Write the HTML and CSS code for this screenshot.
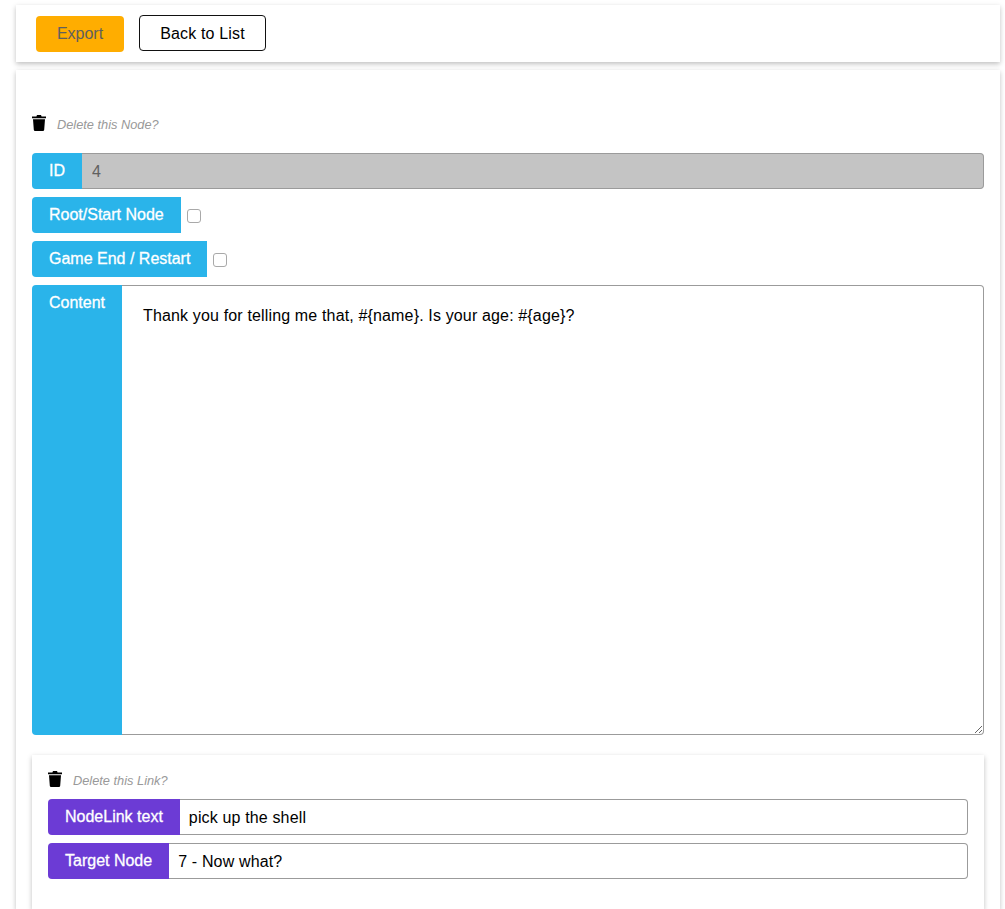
FILE: index.html
```html
<!DOCTYPE html>
<html lang="en">
  <head>
    <meta charset="UTF-8" />
    <title>Edit Node</title>
    <link rel="stylesheet" href="styles.css">
  </head>
  <body>
    <div class="card toolbar">
      <button class="btn btn-export" type="button">Export</button>
      <button class="btn btn-back" type="button">Back to List</button>
    </div>

    <div class="card node">
      <div class="delete-row node-delete">
        <svg class="trash" viewBox="0 0 14 16"><path d="M5 0h4l.6 1.4H14v1.8H0V1.400h4.400zM1 4.300h12l-.8 10.500q-.1 1.200-1.300 1.200H3.100q-1.200 0-1.300-1.200z"/></svg>
        <span class="delete-text">Delete this Node?</span>
      </div>

      <div class="field">
        <label class="field-label" for="node_id">ID</label>
        <input class="field-input" id="node_id" type="text" value="4" disabled />
      </div>
      <div class="field">
        <label class="field-label" for="root_node">Root/Start Node</label>
        <input class="field-check" id="root_node" type="checkbox" />
      </div>
      <div class="field">
        <label class="field-label" for="game_end">Game End / Restart</label>
        <input class="field-check" id="game_end" type="checkbox" />
      </div>
      <div class="field">
        <label class="field-label" for="content">Content</label>
        <textarea class="field-input field-text" id="content">Thank you for telling me that, #{name}. Is your age: #{age}?</textarea>
      </div>

      <div class="card link">
        <div class="delete-row">
          <svg class="trash" viewBox="0 0 14 16"><path d="M5 0h4l.6 1.4H14v1.8H0V1.400h4.400zM1 4.300h12l-.8 10.500q-.1 1.200-1.300 1.200H3.100q-1.200 0-1.300-1.200z"/></svg>
          <span class="delete-text">Delete this Link?</span>
        </div>
        <div class="field">
          <label class="field-label purple" for="link_text">NodeLink text</label>
          <input class="field-input" id="link_text" type="text" value="pick up the shell" />
        </div>
        <div class="field">
          <label class="field-label purple" for="target">Target Node</label>
          <input class="field-input" id="target" type="text" value="7 - Now what?" />
        </div>
      </div>
    </div>
  </body>
</html>
```

FILE: styles.css
```css
body {
  font-family: "Liberation Sans", Arial, sans-serif;
  font-size: 16px;
  margin: 0;
  padding: 5px 5px 0 16px;
  background-color: #fff;
}
.card {
  background-color: #fff;
  box-shadow: 0 2px 5px rgba(0, 0, 0, 0.25);
}
.toolbar {
  display: flex;
  align-items: flex-start;
  height: 57px;
  padding: 10px 20px 0;
  box-sizing: border-box;
  margin-bottom: 8px;
}
.btn {
  font: inherit;
  height: 36px;
  border-radius: 4px;
  cursor: pointer;
}
.btn-export {
  width: 88px;
  margin-top: 1px;
  margin-right: 15px;
  border: none;
  background-color: #ffad00;
  color: #60605f;
}
.btn-back {
  width: 127px;
  padding-top: 2px;
  letter-spacing: 0.15px;
  border: 1px solid #111;
  background-color: #fff;
  color: #000;
}
.node {
  padding: 45px 16px 0;
}
.delete-row {
  display: flex;
  align-items: center;
  height: 16px;
}
.node-delete {
  margin-bottom: 22px;
}
.trash {
  flex: none;
  width: 14px;
  height: 16px;
  fill: #000;
  margin-right: 11px;
}
.delete-text {
  font-size: 12.8px;
  font-style: italic;
  color: #999;
  padding-top: 2px;
}
.field {
  display: flex;
  align-items: center;
  margin-bottom: 8px;
}
.field-label {
  align-self: stretch;
  display: flex;
  align-items: center;
  height: 36px;
  padding: 0 17px;
  background-color: #2ab4ea;
  color: #fff;
  -webkit-text-stroke: 0.3px #fff;
  border-radius: 4px 0 0 4px;
  box-sizing: border-box;
}
.field-label.purple {
  background-color: #6c3bd5;
}
.field-input {
  flex: 1;
  min-width: 0;
  height: 36px;
  font: inherit;
  letter-spacing: 0.15px;
  color: #000;
  padding: 2px 9px 0;
  border: 1px solid #9b9b9b;
  border-left: none;
  border-radius: 0 4px 4px 0;
  background-color: #fff;
  box-sizing: border-box;
  outline: none;
}
.field-input:disabled {
  background-color: #c4c4c4;
  color: #60605f;
  padding-left: 10px;
}
.field-check {
  appearance: none;
  width: 14px;
  height: 14px;
  margin: 2px 0 0 6px;
  border: 1px solid #a9a9a9;
  border-radius: 3px;
  background-color: #fff;
}
.field-text {
  height: 450px;
  padding: 21px 21px;
  line-height: 18px;
}
.field:has(.field-text) .field-label {
  height: 450px;
  align-items: flex-start;
  padding-top: 9px;
}
.link {
  height: 154px;
  margin-top: 20px;
  padding: 16px;
  box-sizing: border-box;
}
.link .delete-row {
  margin-bottom: 12px;
}
```
